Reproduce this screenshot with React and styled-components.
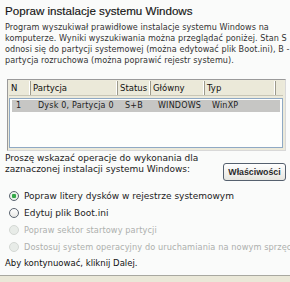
import React from 'react'
import styled, { createGlobalStyle } from 'styled-components'

const GlobalStyle = createGlobalStyle`
	html, body {
		margin: 0;
		padding: 0;
		background: #fafbfa;
	}
`

const lines = [
	'Program wyszukiwał prawidłowe instalacje systemu Windows na',
	'komputerze. Wyniki wyszukiwania można przeglądać poniżej. Stan S',
	'odnosi się do partycji systemowej (można edytować plik Boot.ini), B -',
	'partycja rozruchowa (można poprawić rejestr systemu).',
]

const columns = [
	{ label: 'N', width: 22 },
	{ label: 'Partycja', width: 87 },
	{ label: 'Status', width: 33 },
	{ label: 'Główny', width: 54 },
	{ label: 'Typ', width: 71 },
]

const rows = [['1', 'Dysk 0, Partycja 0', 'S+B', 'WINDOWS', 'WinXP']]

const options = [
	{ label: 'Popraw litery dysków w rejestrze systemowym', checked: true },
	{ label: 'Edytuj plik Boot.ini' },
	{ label: 'Popraw sektor startowy partycji', disabled: true },
	{ label: 'Dostosuj system operacyjny do uruchamiania na nowym sprzęcie', disabled: true },
]

const App = () => {
	return (
		<>
			<GlobalStyle />
			<Page>
				<Title>Popraw instalacje systemu Windows</Title>
				<Desc>
					{lines.map((l) => (
						<div key={l}>{l}</div>
					))}
				</Desc>

				<Frame>
					<HeadRow>
						{columns.map((c) => (
							<HeadCell key={c.label} w={c.width}>
								{c.label}
							</HeadCell>
						))}
					</HeadRow>
					<Body>
						{rows.map((r) => (
							<Row key={r[0]} selected>
								{r.map((v, i) => (
									<Cell key={i} w={columns[i].width}>
										{v}
									</Cell>
								))}
							</Row>
						))}
					</Body>
				</Frame>

				<Prompt>
					<PromptText>
						Proszę wskazać operacje do wykonania dla
						<br />
						zaznaczonej instalacji systemu Windows:
					</PromptText>
					<Button>Właściwości</Button>
				</Prompt>

				<Options>
					{options.map((o) => (
						<Option key={o.label} disabled={o.disabled}>
							<Radio checked={o.checked} disabled={o.disabled} />
							<span>{o.label}</span>
						</Option>
					))}
				</Options>

				<Footer>Aby kontynuować, kliknij Dalej.</Footer>
				<BottomBar />
			</Page>
		</>
	)
}

export default App

const Page = styled.div`
	width: 290px;
	height: 282px;
	overflow: hidden;
	display: flex;
	flex-direction: column;
	font-family: 'DejaVu Sans', sans-serif;
	color: #222;
	background: #fafbfa;
`

const Title = styled.div`
	font-family: 'Liberation Sans', Arial, sans-serif;
	font-size: 11.6px;
	color: #151515;
	padding: 3px 0 0 5px;
	height: 17px;
	line-height: 15px;
	white-space: nowrap;
	-webkit-text-stroke: 0.15px #151515;
`

const Desc = styled.div`
	font-size: 8.1px;
	line-height: 11px;
	color: #333;
	padding: 2px 0 0 5px;
	white-space: nowrap;
	letter-spacing: 0.05px;
`

const Frame = styled.div`
	margin: 13px 4px 0 7px;
	height: 72px;
	flex: none;
	box-sizing: border-box;
	border: 1px solid #9a9a9a;
	border-right-color: #d8d8d8;
	border-bottom-color: #d8d8d8;
	background: #eceadb;
	padding: 1px 2px 2px 1px;
	display: flex;
	flex-direction: column;
`

const HeadRow = styled.div`
	display: flex;
	height: 14px;
	background: #ebe9d9;
	border-bottom: 1px solid #c8c6b6;
`

const HeadCell = styled.div`
	width: ${(p) => p.w}px;
	flex: none;
	font-size: 8.5px;
	line-height: 14px;
	padding-left: 2px;
	color: #111;
	border-right: 1px solid #9c9a8c;
	box-shadow: inset -1px 0 0 #fff;
	box-sizing: border-box;
`

const Body = styled.div`
	flex: 1;
	margin-top: 2px;
	background: #fdfefd;
	border: 1px solid #8fa9c4;
	padding: 1px 2px;
`

const Row = styled.div`
	display: flex;
	height: 12px;
	background: ${(p) => (p.selected ? '#c6c6c4' : 'transparent')};
`

const Cell = styled.div`
	width: ${(p) => p.w}px;
	flex: none;
	font-size: 8px;
	line-height: 12px;
	padding-left: 4px;
	box-sizing: border-box;
	color: #222;
	letter-spacing: 0.2px;
`

const Prompt = styled.div`
	display: flex;
	align-items: flex-start;
	justify-content: space-between;
	padding: 2px 4px 0 5px;
`

const PromptText = styled.div`
	font-size: 9px;
	line-height: 10.5px;
	color: #222;
	white-space: nowrap;
`

const Button = styled.button`
	margin-top: 10px;
	height: 18px;
	width: 63px;
	padding: 0;
	font-family: 'Liberation Sans', Arial, sans-serif;
	font-size: 8.8px;
	font-weight: bold;
	color: #2a2a2a;
	background: linear-gradient(#ffffff, #e6e6e0);
	border: 1px solid #55606e;
	border-radius: 3px;
`

const Options = styled.div`
	display: flex;
	flex-direction: column;
	gap: 5px;
	padding: 9px 0 0 9px;
`

const Option = styled.div`
	display: flex;
	align-items: center;
	gap: 5px;
	height: 12px;
	font-size: ${(p) => (p.disabled ? '8.2px' : '9px')};
	white-space: nowrap;
	color: ${(p) => (p.disabled ? '#adb0ad' : '#222')};
	letter-spacing: ${(p) => (p.disabled ? '0.1px' : '0')};
`

const Radio = styled.span`
	width: 10px;
	height: 10px;
	flex: none;
	border-radius: 50%;
	box-sizing: border-box;
	border: 1px solid ${(p) => (p.disabled ? '#d4d8d4' : '#5a6470')};
	background: ${(p) =>
		p.checked
			? 'radial-gradient(circle, #34a848 0 2px, #e8f2e8 2.5px)'
			: p.disabled
			? '#e8ece8'
			: 'linear-gradient(#ffffff, #e8e8e4)'};
`

const Footer = styled.div`
	font-size: 8.5px;
	color: #111;
	padding: 5px 0 0 5px;
	line-height: 11px;
`

const BottomBar = styled.div`
	margin-top: auto;
	height: 6px;
	flex: none;
	background: #eae8d8;
	border-top: 1px solid #a8a8a0;
`
